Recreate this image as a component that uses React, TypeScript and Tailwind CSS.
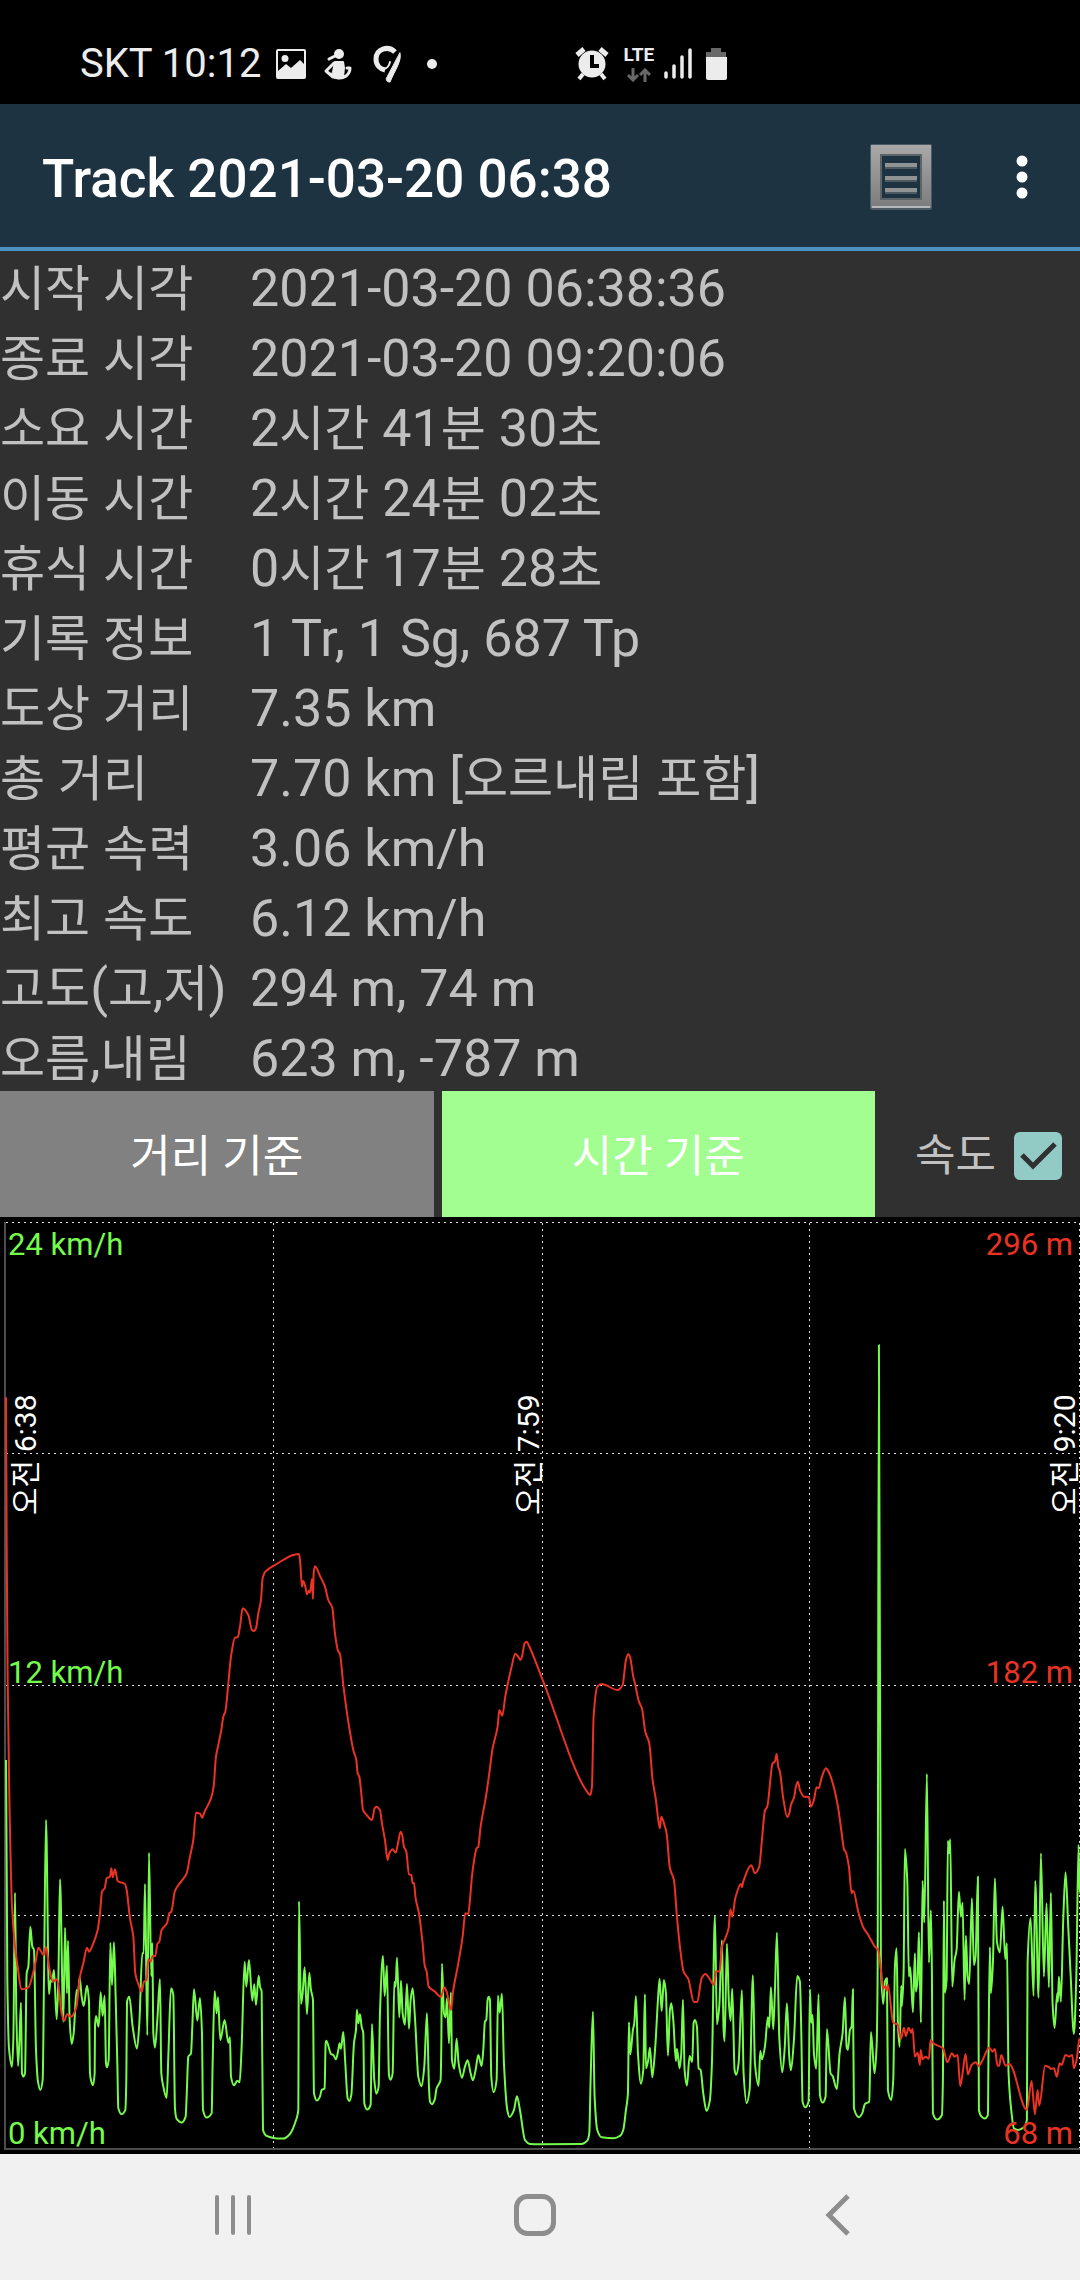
import React, { useState } from 'react';

type Point = [number, number];

const rows = [
  { label: '시작 시각', value: '2021-03-20 06:38:36' },
  { label: '종료 시각', value: '2021-03-20 09:20:06' },
  { label: '소요 시간', value: '2시간 41분 30초' },
  { label: '이동 시간', value: '2시간 24분 02초' },
  { label: '휴식 시간', value: '0시간 17분 28초' },
  { label: '기록 정보', value: '1 Tr, 1 Sg, 687 Tp' },
  { label: '도상 거리', value: '7.35 km' },
  { label: '총 거리', value: '7.70 km [오르내림 포함]' },
  { label: '평균 속력', value: '3.06 km/h' },
  { label: '최고 속도', value: '6.12 km/h' },
  { label: '고도(고,저)', value: '294 m, 74 m' },
  { label: '오름,내림', value: '623 m, -787 m' },
];

// Samples are x,y pairs at three units per chart pixel, each leg with its own start x
const speedLegs = [
  {
    start: 0,
    samples:
      '18,240 22,900 27,1105 36,1160 40,1080 45,638 49,1000 54,1158 58,1090 63,968 66,1180 70,1190 75,1180 80,880 85,860 91,740 97,800 102,810 108,1110 114,1205 121,1230 128,1200 132,900 138,420 147,942 152,900 156,905 162,870 170,1018 175,900 180,598 190,1025 195,743 201,940 204,782 209,1020 215,1092 221,1060 230,930 234,940 239,892 245,950 251,978 261,917 267,965 270,1180 274,1205 279,1216 284,1180 285,1040 288,1008 296,1040 302,937 308,1008 314,947 318,1150 321,1162 326,1140 331,788 336,915 342,787 347,950 352,1150 355,1285 365,1303 376,1290 379,1200 381,965 388,950 398,1040 411,1106 418,1030 427,820 431,820 435,612 442,1066 447,518 454,888 457,789 460,1060 465,1103 472,1020 480,898 484,1180 490,1220 500,1254 505,1130 513,925 520,945 525,1285 530,1317 545,1328 557,1310 560,1250 565,1130 573,1120 577,1040 582,928 592,1022 600,954 606,1060 609,1290 620,1313 635,1300 638,1150 644,933 650,1000 654,952 661,1080 674,1020 685,1088 690,1072 693,1190 702,1216 712,1202 719,1207 725,1100 734,845 739,920 747,840 757,962 763,913 768,975 776,887 780,920 785,935 789,1350 800,1368 820,1374',
  },
  {
    start: 810,
    samples:
      '28,1376 40,1376 60,1362 80,1315 85,1290 87,664 93,972 98,940 104,862 111,1002 118,879 123,930 129,960 132,1240 141,1262 150,1250 155,1230 164,1225 167,1090 169,1082 183,1122 190,1125 198,1138 205,1110 209,1090 213,1106 220,1056 226,1150 233,1255 238,1263 244,1245 252,1090 258,1050 261,989 265,1030 270,1003 275,1040 280,1060 283,1270 292,1289 302,1275 306,1032 313,1200 319,1241 326,1220 330,1000 339,828 344,948 351,857 357,1185 362,1199 368,1180 373,905 377,920 381,833 388,1012 393,902 398,1000 405,1034 411,912 417,1046 422,960 428,925 436,1030 445,1190 455,1219 463,1160 471,1000 477,1220 480,1265 486,1273 494,1260 500,1225 512,1200 514,1100 516,851 522,1000 527,1012 531,955 537,1090 543,937 546,1140 553,1166 560,1076 566,1150 576,1193 585,1160 593,1141 602,1180 609,1201 617,1170 625,1125 635,1158 640,1110 645,1025 649,1020 653,960 656,950 660,960 664,1190 671,1237 680,1200 684,947 689,998 696,941 702,1150 712,1290 719,1311 732,1290 741,1249 750,1290 765,1380 780,1392',
  },
  {
    start: 1620,
    samples:
      '0,1393 125,1392 142,1382 148,1360 152,1200 159,995 164,1250 172,1350 185,1372 222,1375 240,1368 250,1350 258,1290 264,1240 267,1027 271,1123 279,1050 283,1030 288,948 294,1120 303,1211 310,1170 315,943 318,1165 325,1140 330,1103 337,1192 346,1100 354,960 359,896 365,993 372,900 378,940 384,1127 390,990 394,970 400,1020 408,1143 411,1106 419,1165 424,1120 429,959 434,1170 441,1217 449,1128 457,1146 461,1030 465,1020 471,1040 476,1165 482,1170 490,1240 500,1293 510,1260 516,1150 525,708 531,1033 538,980 546,781 551,1050 554,1084 561,791 567,970 572,1022 577,926 584,1170 589,1184 596,1150 606,931 611,1180 620,1270 629,1230 639,886 645,1150 656,1217 661,1113 666,1138 675,1100 684,1012 688,1043 693,922 700,1048 705,930 711,758 718,1070 727,1177 734,1110 741,970 748,1130 753,1171 762,1080 772,888 780,905 784,1050',
  },
  {
    start: 2400,
    samples:
      '8,1265 16,1282 26,1265 30,928 34,1028 38,1005 42,1120 49,1166 56,943 60,1245 68,1268 77,1250 81,1047 92,1180 98,1188 111,1227 119,1120 128,1060 135,952 140,1100 144,1110 150,1050 155,1040 159,928 162,1285 177,1312 187,1300 195,1272 208,1265 213,1056 224,1180 230,1100 233,900 237,-1005 243,860 250,972 255,905 261,895 264,1230 274,1260 280,1200 285,860 290,805 294,1030 299,1100 304,917 306,978 311,880 315,507 322,600 327,890 331,862 339,997 345,820 348,935 353,900 357,757 363,1028 368,603 373,728 381,282 387,848 393,691 396,880 399,1300 411,1319 426,1305 429,1200 432,662 435,938 440,900 444,482 447,520 451,478 457,920 464,840 470,810 477,635 483,710 488,668 494,960 498,767 503,890 508,912 516,655 522,855 527,830 534,590 537,1290 545,1310 555,1316 564,1305 566,1100 570,802 573,940 579,850 585,595 591,785 600,817 608,680 616,837 621,790 626,1180 634,1290 642,1345 655,1350 672,1342 681,1320 683,850 692,714 701,948 706,603 716,953 723,520 732,890 740,670 747,922 753,638 758,970 764,1044 772,940 774,965 777,890 783,965 790,720 797,577 805,740 812,880 822,1062 829,900 836,495 839,640',
  },
];

const altitudeLegs = [
  {
    start: 0,
    samples:
      '18,-848 20,-400 23,0 28,350 36,680 45,800 53,860 64,928 85,922 99,880 108,840 115,803 131,825 138,800 147,860 159,905 171,897 177,930 185,1000 193,1022 201,1003 213,1010 229,982 240,890 250,850 261,803 267,815 280,790 293,750 300,700 306,635 314,625 320,595 330,590 334,565 338,592 345,568 353,603 375,612 380,630 390,715 400,770 406,880 416,915 425,936 432,905 440,900 445,838 452,845 458,828 466,828 472,792 478,785 485,750 501,730 508,700 514,695 525,633 543,605 560,580 570,530 580,480 588,398 601,402 606,413 614,395 633,355 641,320 648,230 655,195 664,150 670,110 676,95 686,0 693,-70 705,-127 713,-128 720,-160 728,-215 745,-195 756,-150 762,-147 768,-155 775,-200 783,-240 788,-305 796,-325 830,-348 880,-375 897,-378 901,-350 906,-280 910,-297 916,-280 921,-257 926,-268 930,-262 936,-303 939,-243 941,-320 945,-341 960,-312 975,-280 985,-240 997,-217 1005,-140 1014,-88 1020,-78',
  },
  {
    start: 810,
    samples:
      '220,15 235,125 250,210 259,240 263,280 268,290 274,340 279,390 290,405 306,420 314,385 319,380 330,390 336,430 345,480 353,540 358,520 368,508 377,518 385,485 392,455 396,462 402,500 409,515 417,583 424,585 428,610 432,608 437,655 447,700 458,790 464,855 470,875 476,920 495,935 513,951 523,922 530,935 543,990 550,930 565,850 578,770 586,700 595,702 600,660 607,580 620,505 625,500 632,440 648,350 658,280 668,205 683,140 688,90 697,107 706,50 717,-5 725,-40 736,-79 745,-70 751,-60 756,-70 764,-110 770,-115 776,-105',
  },
  {
    start: 1620,
    samples:
      '10,5 145,340 151,345 156,320 161,110 172,20 185,12 233,30 248,15 258,-60 265,-78 270,-70 280,-10 285,10 297,65 306,85 316,155 328,190 338,300 348,360 355,420 360,445 364,410 372,430 380,460 390,565 402,600 411,710 420,800 431,875 445,897 462,966 472,966 485,895 496,882 505,890 522,914 529,873 539,875 546,800 556,775 566,745 571,688 577,710 586,655 603,612 606,622 610,605 634,556 645,580 658,560 666,480 675,392 682,380 698,250 705,245 710,222 715,260 720,275 730,355 742,411 748,400 753,375 763,350 768,320 774,305 780,330 792,350 806,351',
  },
  {
    start: 2400,
    samples:
      '28,355 33,380 42,360 50,322 56,325 66,290 78,265 87,277 100,315 115,385 124,450 133,510 137,515 147,560 155,640 160,632 175,695 190,742 205,765 225,800 235,810 243,870 250,925 256,920 260,932 264,915 280,1028 294,1035 303,1077 312,1043 318,1068 326,1043 334,1058 338,1046 345,1130 353,1118 360,1155 362,1110 368,1138 376,1130 387,1136 392,1080 400,1090 430,1106 442,1147 456,1120 464,1130 473,1125 481,1218 488,1180 497,1122 504,1183 515,1155 528,1147 536,1158 548,1140 568,1103 578,1115 585,1107 593,1157 598,1157 604,1125 617,1157 628,1152 681,1290 695,1203 705,1303 713,1230 718,1277 736,1157 748,1162 752,1167 762,1165 771,1190 779,1150 785,1155 797,1125 808,1130 817,1125 822,1165 830,1140 835,1100 839,1075',
  },
];

const readLegs = (legs: { start: number; samples: string }[]): Point[] =>
  legs.flatMap(leg =>
    leg.samples.split(' ').map((pair): Point => {
      const [x, y] = pair.split(',').map(Number);
      return [leg.start + x, y];
    })
  );

// Monotone cubic through the points, flat at every peak and dip
const smoothPath = (points: Point[]): string => {
  const slope = (i: number) => (points[i + 1][1] - points[i][1]) / (points[i + 1][0] - points[i][0]);
  const tangents = points.map((_, i) => {
    if (i === 0 || i === points.length - 1) return 0;
    const before = slope(i - 1);
    const after = slope(i);
    return before * after <= 0 ? 0 : (2 * before * after) / (before + after);
  });

  let d = `M${points[0][0]},${points[0][1]}`;
  for (let i = 1; i < points.length; i++) {
    const [x0, y0] = points[i - 1];
    const [x1, y1] = points[i];
    const step = (x1 - x0) / 3;
    d += `C${x0 + step},${y0 + tangents[i - 1] * step} ${x1 - step},${y1 - tangents[i] * step} ${x1},${y1}`;
  }
  return d;
};

const speedPath = smoothPath(readLegs(speedLegs));
const altitudePath = smoothPath(readLegs(altitudeLegs));

// Hangul is set a little smaller than the digits and Latin letters beside it
const MixedText: React.FC<{ text: string }> = ({ text }) => (
  <>
    {text.split(/([가-힣]+)/).map((part, i) =>
      i % 2 === 1 ? <span key={i} className="text-[49px] leading-none">{part}</span> : part
    )}
  </>
);

const StatusBar: React.FC = () => (
  <div className="h-[104px] bg-black text-[#ececec] flex items-center pl-20 pt-6">
    <span className="text-[40px] leading-10">SKT 10:12</span>
    <div className="flex items-center ml-[14px]">
      <svg className="w-8 h-9" viewBox="0 0 32 36">
        <path
          fill="currentColor"
          fillRule="evenodd"
          d="M3 3h26a2 2 0 0 1 2 2v26a2 2 0 0 1-2 2H3a2 2 0 0 1-2-2V5a2 2 0 0 1 2-2zM3 5v20l8-7 5 4 9-8 4 4V5zM10 9a3.500 3.500 0 1 1 0 7 3.500 3.500 0 0 1 0-7z"
        />
      </svg>
      <svg className="w-8 h-9 ml-4" viewBox="0 0 32 36" fill="none" stroke="currentColor" strokeLinecap="round" strokeLinejoin="round">
        <circle cx="16" cy="8" r="5" fill="currentColor" stroke="none" />
        <path d="M12 10 6 13" strokeWidth="3" />
        <path d="M12 16h8l1 6-1 9-8 1-2-6z" fill="currentColor" strokeWidth="2" />
        <path d="M11 17 3 25l7 6" strokeWidth="3" />
        <path d="M8 28q8 7 15 2 4-3 4-8M24 22l3 0" strokeWidth="3" />
      </svg>
      <svg className="w-8 h-10 ml-4" viewBox="0 0 32 40" fill="none" stroke="currentColor" strokeLinecap="round">
        <path d="M24 8C17 1 5 5 5 15c0 6 4 10 9 11" strokeWidth="5" strokeLinecap="butt" />
        <path d="M13 25c4-1 5-3 6-7" strokeWidth="2" />
        <path d="M29 9c2 8-5 17-10 29h-1a3 3 0 0 1-2-5z" fill="currentColor" strokeWidth="1" />
      </svg>
      <span className="w-[10px] h-[10px] ml-6 rounded-full bg-current" />
    </div>
    <div className="flex items-center ml-[138px]">
      <svg className="w-[34px] h-9" viewBox="0 0 34 36">
        <circle cx="17" cy="18" r="13.500" fill="currentColor" />
        <path d="m2 9 7-6M32 9l-7-6" stroke="currentColor" strokeWidth="5" />
        <path d="m8 28-4 5M26 28l4 5" stroke="currentColor" strokeWidth="4" />
        <path d="M17 9v11h7" fill="none" stroke="#000" strokeWidth="4" />
      </svg>
      <div className="flex flex-col items-center ml-[14px]">
        <span className="text-[19px] leading-[18px] font-bold">LTE</span>
        <svg className="w-6 h-[14px] mt-1 text-[#686868]" viewBox="0 0 24 14" fill="none" stroke="currentColor" strokeWidth="3">
          <path d="M6 0v12M1 7l5 5 5-5M18 14V2M13 7l5-5 5 5" />
        </svg>
      </div>
      <svg className="w-7 h-9 ml-[10px]" viewBox="0 0 28 36" stroke="currentColor" strokeWidth="3.500" strokeLinecap="round">
        <path d="M2 27v4M10 20v11M18 11v20M26 4v27" />
      </svg>
      <svg className="w-[22px] h-9 ml-[13px]" viewBox="0 0 22 36">
        <path d="M6 2h10v4h5v6H1V6h5z" fill="#686868" />
        <path d="M1 11h21v21a2 2 0 0 1-2 2H3a2 2 0 0 1-2-2z" fill="currentColor" />
      </svg>
    </div>
  </div>
);

const AppBar: React.FC = () => (
  <header className="h-[147px] bg-[#1e3342] border-b-4 border-[#4b92c0] flex items-center pt-[2px] pl-[42px] pr-[38px]">
    <h1 className="flex-1 pt-1 text-[53px] leading-[64px] font-medium text-white">Track 2021-03-20 06:38</h1>
    <button type="button" aria-label="목록" className="mr-[69px]">
      <svg className="w-16 h-[70px]" viewBox="0 0 64 70">
        <defs>
          <linearGradient id="frame" x1="0" y1="0" x2="0" y2="1">
            <stop offset="0" stopColor="#a8a8a8" />
            <stop offset="1" stopColor="#7c7c7c" />
          </linearGradient>
        </defs>
        <rect x="1" y="2" width="62" height="66" rx="2" fill="#4b5a64" />
        <path d="M2 3h60v63H2z" fill="url(#frame)" />
        <path d="M3 65h58" stroke="#b4b8ba" strokeWidth="2" />
        <path d="M12 13h40v44H12z" fill="#1e3342" stroke="#5d6468" strokeWidth="2" />
        <path d="M16 23h32M16 36h32M16 48h32" stroke="#8f9394" strokeWidth="4" />
        <path d="M16 26h32M16 39h32M16 51h32" stroke="#4e5a62" strokeWidth="2" />
      </svg>
    </button>
    <button type="button" aria-label="메뉴" className="w-10 h-16 flex items-center justify-center">
      <svg className="w-3 h-11" viewBox="0 0 12 44" fill="#fff">
        <circle cx="6" cy="6" r="5.500" />
        <circle cx="6" cy="22" r="5.500" />
        <circle cx="6" cy="38" r="5.500" />
      </svg>
    </button>
  </header>
);

const TrackChart: React.FC<{ showSpeed: boolean }> = ({ showSpeed }) => (
  <svg className="block w-full h-auto bg-black" viewBox="0 0 1080 937" fontSize="31">
    <g stroke="#e0e0e0" strokeWidth="1" strokeDasharray="2 4">
      <path d="M6 5.500H1080M6 236.500H1080M6 468.500H1080M6 698.500H1080" />
      <path d="M273.500 6V931M542.500 6V931M809.500 6V931M1079.500 6V931" />
    </g>
    <path d="M5 5V932H1080" fill="none" stroke="#4c4c4c" strokeWidth="2" />
    <g transform="translate(0 463) scale(0.3333)" fill="none" strokeWidth="6" strokeLinejoin="round">
      {showSpeed && <path d={speedPath} stroke="#75fb4c" />}
      <path d={altitudePath} stroke="#ea3323" />
    </g>
    <g fill="#75fb4c">
      <text x="8" y="38">24 km/h</text>
      <text x="8" y="466">12 km/h</text>
      <text x="8" y="927">0 km/h</text>
    </g>
    <g fill="#ea3323" textAnchor="end">
      <text x="1073" y="38">296 m</text>
      <text x="1073" y="466">182 m</text>
      <text x="1073" y="927">68 m</text>
    </g>
    <g fill="#fff" fontSize="30">
      <text transform="translate(36 298) rotate(-90)">오전 6:38</text>
      <text transform="translate(539 298) rotate(-90)">오전 7:59</text>
      <text transform="translate(1075 298) rotate(-90)">오전 9:20</text>
    </g>
  </svg>
);

const NavBar: React.FC = () => (
  <nav className="h-[126px] bg-[#f1f1f1] text-[#8d8d8d] grid grid-cols-3 pl-[82px] pr-[91px] pb-1">
    <button type="button" aria-label="최근 앱" className="flex items-center justify-center">
      <svg className="w-11 h-11" viewBox="0 0 44 44" stroke="currentColor" strokeWidth="4" strokeLinecap="round">
        <path d="M6 4v36M22 4v36M38 4v36" />
      </svg>
    </button>
    <button type="button" aria-label="홈" className="flex items-center justify-center">
      <svg className="w-11 h-11" viewBox="0 0 44 44" fill="none" stroke="currentColor" strokeWidth="5">
        <rect x="3.500" y="3.500" width="37" height="37" rx="11" />
      </svg>
    </button>
    <button type="button" aria-label="뒤로" className="flex items-center justify-center">
      <svg className="w-11 h-11" viewBox="0 0 44 44" fill="none" stroke="currentColor" strokeWidth="5">
        <path d="M32 3 13 22l19 19" />
      </svg>
    </button>
  </nav>
);

export default function App() {
  const [basis, setBasis] = useState<'distance' | 'time'>('time');
  const [showSpeed, setShowSpeed] = useState(true);

  return (
    <div className="min-h-screen flex flex-col bg-[#303030] font-['Roboto','Noto_Sans_CJK_KR',sans-serif]">
      <StatusBar />
      <AppBar />

      <main className="flex-1 text-[#c1c1c1]">
        <table className="w-full text-[52px] leading-[64px] text-left">
          <tbody>
            {rows.map(row => (
              <tr key={row.label} className="h-[70px]">
                <th scope="row" className="w-[250px] p-0 pt-[6px] font-normal whitespace-nowrap">
                  <MixedText text={row.label} />
                </th>
                <td className="p-0 pt-[6px]">
                  <MixedText text={row.value} />
                </td>
              </tr>
            ))}
          </tbody>
        </table>

        <div className="flex gap-2 h-[126px] text-[44px]">
          <button
            type="button"
            onClick={() => setBasis('distance')}
            className={`flex-1 pt-[6px] text-white ${basis === 'distance' ? 'bg-[#a2fe90]' : 'bg-[#818181]'}`}
          >
            거리 기준
          </button>
          <button
            type="button"
            onClick={() => setBasis('time')}
            className={`flex-1 pt-[6px] text-white ${basis === 'time' ? 'bg-[#a2fe90]' : 'bg-[#818181]'}`}
          >
            시간 기준
          </button>
          <label className="w-[197px] flex items-center justify-end gap-[18px] pt-1 pr-[18px]">
            속도
            <span className="relative w-12 h-12">
              <input
                type="checkbox"
                checked={showSpeed}
                onChange={e => setShowSpeed(e.target.checked)}
                className="peer block w-12 h-12 appearance-none rounded-md border-4 border-[#92cac5] checked:bg-[#92cac5]"
              />
              <svg
                className="absolute inset-0 w-12 h-12 pointer-events-none opacity-0 peer-checked:opacity-100"
                viewBox="0 0 48 48"
                fill="none"
                stroke="#303030"
                strokeWidth="5"
              >
                <path d="m8 23 11 11 22-22" />
              </svg>
            </span>
          </label>
        </div>

        <TrackChart showSpeed={showSpeed} />
      </main>

      <NavBar />
    </div>
  );
}
